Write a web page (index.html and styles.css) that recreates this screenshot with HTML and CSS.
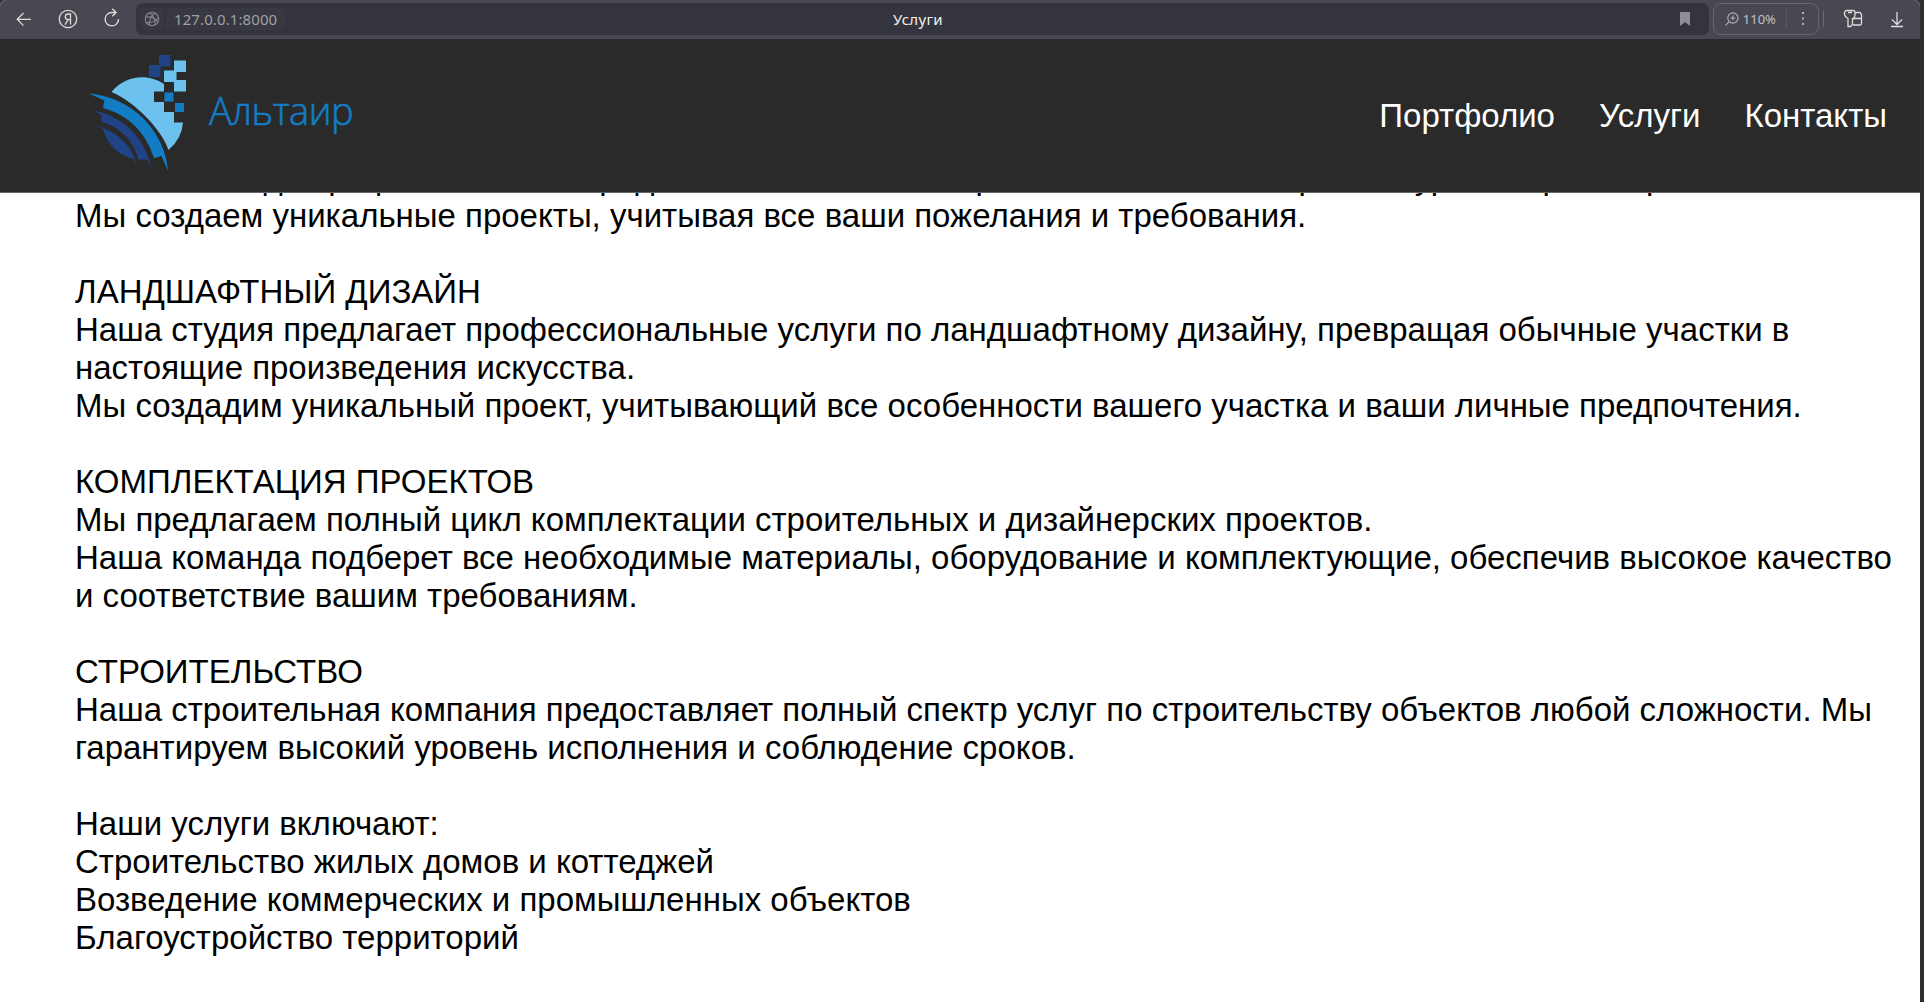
FILE: index.html
```html
<!DOCTYPE html>
<html lang="ru">
<head>
<meta charset="utf-8">
<title>Услуги</title>
<link rel="stylesheet" href="styles.css">
</head>
<body>
<div class="browser">
  <div class="toolbar">
    <svg class="tools-left" width="136" height="38" viewBox="0 0 136 38" fill="none" stroke="#deded8" stroke-width="1.3">
      <path d="M31 19.3H17.5M23.5 13l-6.3 6.3 6.3 6.3"/>
      <circle cx="68" cy="19" r="8.7"/>
      <path d="M70.5 24.5V14h-2.2c-4 0-4 5.6 0 5.6h2.2M68.2 19.6l-3.2 5"/>
      <path d="M118.5 19a6.700 6.700 0 1 1-6.500-6.500h3.500M112.300 8.800l3.800 3.700-3.800 3.700"/>
    </svg>
    <div class="address">
      <svg class="globe" width="24" height="22" viewBox="0 0 24 22" fill="none" stroke="#85858b" stroke-width="1.1">
        <circle cx="12" cy="11" r="6.7"/>
        <path d="M9.500 4.800c4 3 6 7.500 5.500 12.200M15 5c-4 3-6 7.500-5.500 12.200M5.500 9.500c4-1.500 9 0 12 4M6.500 14.500c4 .5 9-1.500 12-5"/>
      </svg>
      <span class="url">127.0.0.1:8000</span>
      <span class="page-title">Услуги</span>
      <svg class="bookmark" width="10" height="14" viewBox="0 0 10 14"><path d="M0 1q0-1 1-1h8q1 0 1 1v13l-5-4-5 4z" fill="#8e8e94"/></svg>
    </div>
    <div class="zoom">
      <svg width="14" height="14" viewBox="0 0 14 14" fill="none" stroke="#b4b4b8" stroke-width="1.1"><circle cx="8" cy="6" r="5.2"/><path d="M4.3 9.700L.5 13.500M5.500 6h5M8 3.500v5"/></svg>
      <span class="zoom-value">110%</span>
      <span class="zoom-line"></span>
      <svg width="4" height="14" viewBox="0 0 4 14" fill="#b4b4b8"><path d="M1 0h2v2H1zM1 5.500h2v2H1zM1 11h2v2H1z"/></svg>
    </div>
    <span class="divider"></span>
    <svg class="tools-right" width="70" height="38" viewBox="0 0 70 38" fill="none" stroke="#deded8" stroke-width="1.3">
      <path d="M3 10.500h7q2 0 2 2v3q0 2-2.500 3v6l-2 2h-2.500v-8Q2 17 1.500 14.500q-.5-3 1.500-4zM5 12.500h4M11.500 12.500h5.500l1.500 2v9q0 1.500-1.500 1.500h-7M10 18.500h8.500"/>
      <path d="M54 12v12.500M49 19.500l5 5 5-5M48 26.500h12"/>
    </svg>
  </div>
  <header class="header">
    <a class="brand">
      <svg width="100" height="120" viewBox="0 0 100 120">
        <path d="M22.500 37C36 20 59 18 75 29v7.500H65V47h10v10h10v10.500h9q-1 16-14.500 27.500C73 75 46 47 22.500 37z" fill="#6cc1ee"/>
        <path d="M85 5.500h12V17H87.500v8H97v11.500H85V27h-10V15.500h10z" fill="#6cc1ee"/>
        <path d="M70 0h11.500v11.500H71.500v10.500H60V10h10z" fill="#1f4384"/>
        <path d="M75.500 37.500h9v9h-9zM86 48h9v9h-9z" fill="#127dc4"/>
        <path d="M0 38.500C43 42 76 76 79 116L72.500 101l-7.500 2C57 78 40 60 14 53l1.500-7.500z" fill="#127dc4"/>
        <path d="M4 55.500C35 61 56 84 62.500 113L58 104.500h-8.500C44 84 30 72 12.500 67V60z" fill="#1f4384"/>
        <path d="M6 70c22 6 39 22 41.500 41l-3-7C28 100 17 87 14 74z" fill="#1f4384"/>
      </svg>
      <span class="brand-name">Альтаир</span>
    </a>
    <nav class="nav"><a>Портфолио</a><a>Услуги</a><a>Контакты</a></nav>
  </header>
  <main class="content">
    <p>Наша команда профессионалов предлагает комплексные решения в области архитектурного проектирования.<br>Мы создаем уникальные проекты, учитывая все ваши пожелания и требования.</p>
    <p>ЛАНДШАФТНЫЙ ДИЗАЙН<br>Наша студия предлагает профессиональные услуги по ландшафтному дизайну, превращая обычные участки в<br>настоящие произведения искусства.<br>Мы создадим уникальный проект, учитывающий все особенности вашего участка и ваши личные предпочтения.</p>
    <p>КОМПЛЕКТАЦИЯ ПРОЕКТОВ<br>Мы предлагаем полный цикл комплектации строительных и дизайнерских проектов.<br>Наша команда подберет все необходимые материалы, оборудование и комплектующие, обеспечив высокое качество<br>и соответствие вашим требованиям.</p>
    <p>СТРОИТЕЛЬСТВО<br>Наша строительная компания предоставляет полный спектр услуг по строительству объектов любой сложности. Мы<br>гарантируем высокий уровень исполнения и соблюдение сроков.</p>
    <p>Наши услуги включают:<br>Строительство жилых домов и коттеджей<br>Возведение коммерческих и промышленных объектов<br>Благоустройство территорий</p>
  </main>
</div>
</body>
</html>
```
FILE: styles.css
```css
* { box-sizing: border-box; }
body { margin: 0; height: 1002px; overflow: hidden; background: #2b2e33; font-family: "Liberation Sans", Arial, sans-serif; }
.browser { width: 1920px; height: 1002px; overflow: hidden; background: #fff; border-radius: 6px 6px 0 0; }
.toolbar { display: flex; align-items: center; height: 39px; padding-bottom: 1px; background: #484752; font-family: "Noto Sans", sans-serif; }
.address { display: flex; align-items: center; width: 1573px; height: 32px; padding: 0 19px 0 4px; background: #34343e; border-radius: 7px; }
.globe { background: #373841; border-radius: 4px; }
.url { width: 119px; margin-left: 2px; padding-left: 8px; background: #373841; border-radius: 4px; color: #a0a0a5; font-size: 15px; line-height: 22px; letter-spacing: 0.1px; white-space: nowrap; }
.page-title { flex: 1; margin-left: 608px; color: #f2f2ee; font-size: 15px; line-height: 22px; letter-spacing: 0.3px; }
.zoom { display: flex; align-items: center; width: 106px; height: 32px; margin-left: 4px; padding: 0 13px 0 11px; border: 1px solid #666570; border-radius: 8px; color: #c2c2c4; font-size: 13px; }
.zoom-value { margin-left: 4px; width: 44px; }
.zoom-line { width: 1px; height: 18px; margin-right: 14px; background: #5a5964; }
.divider { width: 1px; height: 16px; margin: 0 19px 0 4px; background: #6a6974; }
.header { display: flex; justify-content: space-between; height: 154px; padding: 16px 33px 0 89px; background: #2a2a2a; border-bottom: 1px solid #666; }
.brand { display: flex; color: #127dc4; }
.brand-name { margin: 29px 0 0 20px; font-family: "Open Sans", sans-serif; font-size: 38px; line-height: 52px; font-weight: 300; letter-spacing: -0.5px; -webkit-text-stroke: 0.6px #127dc4; }
.nav { display: flex; gap: 44px; padding-top: 42px; color: #fff; font-size: 33px; line-height: 38px; }
.content { height: 809px; overflow: hidden; padding-left: 75px; font-size: 33px; line-height: 38px; white-space: nowrap; }
.content p { margin: 0 0 38px; }
.content p:first-child { margin-top: -34px; }
```
